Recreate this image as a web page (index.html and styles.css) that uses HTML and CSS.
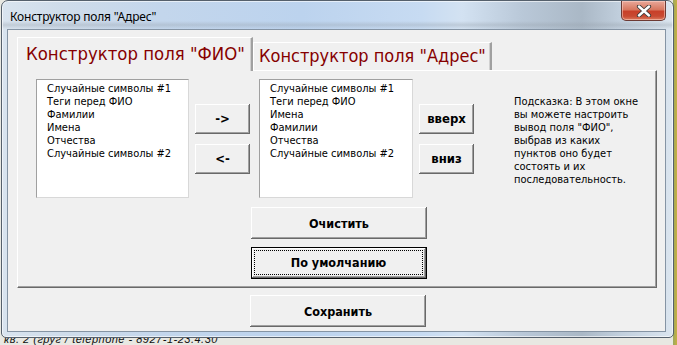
FILE: index.html
```html
<!DOCTYPE html>
<html lang="ru">
<head>
<meta charset="utf-8">
<title>Конструктор поля "Адрес"</title>
<link rel="stylesheet" href="styles.css">
</head>
<body>
<div class="desk">
  <div class="window">
    <div class="titlebar">
      <span class="title">Конструктор поля "Адрес"</span>
      <div class="close">
        <svg width="16" height="12" viewBox="0 0 16 12"><path d="M3 1.5 L13 10.5 M13 1.5 L3 10.5" stroke="#3a3a3a" stroke-width="4.2" stroke-linecap="round"/><path d="M3 1.5 L13 10.5 M13 1.5 L3 10.5" stroke="#fff" stroke-width="2.4" stroke-linecap="round"/></svg>
      </div>
    </div>
    <div class="client">
      <div class="tabs">
        <div class="tab active">Конструктор поля "ФИО"</div>
        <div class="tab second">Конструктор поля "Адрес"</div>
      </div>
      <div class="page">
        <div class="row">
          <ul class="list">
            <li>Случайные символы #1</li>
            <li>Теги перед ФИО</li>
            <li>Фамилии</li>
            <li>Имена</li>
            <li>Отчества</li>
            <li>Случайные символы #2</li>
          </ul>
          <div class="btncol">
            <button class="btn small">-&gt;</button>
            <button class="btn small">&lt;-</button>
          </div>
          <ul class="list list2">
            <li>Случайные символы #1</li>
            <li>Теги перед ФИО</li>
            <li>Имена</li>
            <li>Фамилии</li>
            <li>Отчества</li>
            <li>Случайные символы #2</li>
          </ul>
          <div class="btncol">
            <button class="btn small">вверх</button>
            <button class="btn small">вниз</button>
          </div>
          <p class="hint">Подсказка: В этом окне<br>вы можете настроить<br>вывод поля "ФИО",<br>выбрав из каких<br>пунктов оно будет<br>состоять и их<br>последовательность.</p>
        </div>
        <div class="actions">
          <button class="btn wide">Очистить</button>
          <button class="btn wide focused"><span class="focus">По умолчанию</span></button>
        </div>
      </div>
      <div class="footer">
        <button class="btn wide save">Сохранить</button>
      </div>
    </div>
  </div>
  <div class="backtext">кв. 2 (груг / telephone - 8927-1-23.4.30</div>
</div>
</body>
</html>
```
FILE: styles.css
```css
html, body {
  margin: 0;
  padding: 0;
}
body {
  width: 677px;
  height: 345px;
  overflow: hidden;
  background: linear-gradient(to right, #e8e8e2 0, #e8e8e2 673px, #9aa860 673px, #c8b040 677px);
  font-family: "DejaVu Sans Condensed", "DejaVu Sans", sans-serif;
}
.desk {
  position: relative;
  width: 677px;
  height: 345px;
}
.window {
  position: relative;
  z-index: 1;
  box-sizing: border-box;
  margin-left: 1px;
  width: 673px;
  height: 338px;
  border: 1px solid #55606c;
  border-radius: 7px 7px 5px 5px;
  padding: 0 6px 5px 5px;
  display: flex;
  flex-direction: column;
  background:
    linear-gradient(to bottom, rgba(255,255,255,0) 0, rgba(255,255,255,0) 20px, rgba(150,160,170,0.35) 24px, rgba(255,255,255,0) 28px),
    linear-gradient(to right, #d9e4ef 0, #cfdcea 60px, #c3d6ec 160px, #bcd3ee 300px, #c7dbf2 420px, #d3e2f2 460px, #b9c8d8 520px, #aab8c6 580px, #c2d0de 620px, #dce6f0 673px);
  box-shadow: inset 0 0 0 1px rgba(255,255,255,0.6);
}
.titlebar {
  height: 28px;
  display: flex;
  align-items: flex-start;
}
.title {
  font-family: "Noto Sans", "Open Sans", sans-serif;
  font-size: 12px;
  color: #000;
  margin-top: 7px;
  margin-left: 3px;
  letter-spacing: -0.2px;
}
.close {
  margin-left: auto;
  margin-right: 1px;
  width: 45px;
  height: 20px;
  box-sizing: border-box;
  border: 1px solid #6c3a34;
  border-top: none;
  border-radius: 0 0 5px 5px;
  background: linear-gradient(to bottom, #e9a89a 0, #d87860 45%, #c8402a 55%, #c84a32 80%, #dc7a5e 100%);
  box-shadow: inset 0 0 0 1px rgba(255,220,210,0.5);
  display: flex;
  align-items: center;
  justify-content: center;
}
.client {
  box-sizing: border-box;
  width: 659px;
  height: 303px;
  background: #f0f0f0;
  border: 1px solid #8594a4;
  padding: 7px 0 0 9px;
  display: flex;
  flex-direction: column;
}
.tabs {
  display: flex;
  align-items: flex-end;
  height: 33px;
}
.tab {
  box-sizing: border-box;
  height: 28px;
  padding: 0 4px 0 5px;
  font-size: 18px;
  color: #860000;
  line-height: 26px;
  background: #f0f0f0;
  border-top: 1px solid #fff;
  border-left: 1px solid #fff;
  border-right: 2px solid #a0a0a0;
  box-shadow: inset -1px 0 0 #d0d0d0;
  white-space: nowrap;
}
.tab.active {
  width: 236px;
  height: 34px;
  line-height: 31px;
  font-size: 18.4px;
  padding: 0 0 0 8px;
  position: relative;
  z-index: 2;
  margin-bottom: -1px;
}
.page {
  box-sizing: border-box;
  width: 640px;
  height: 218px;
  border-top: 1px solid #fff;
  border-left: 1px solid #fff;
  border-right: 1px solid #696969;
  border-bottom: 1px solid #696969;
  box-shadow: inset -1px -1px 0 #a0a0a0;
  padding: 8px 0 0 18px;
}
.row {
  display: flex;
  align-items: flex-start;
}
.list {
  box-sizing: border-box;
  width: 153px;
  height: 119px;
  margin: 0;
  padding: 2px 0 0 10px;
  list-style: none;
  background: #fff;
  border-top: 1px solid #a0a0a0;
  border-left: 1px solid #a0a0a0;
  border-right: 1px solid #d8d8d8;
  border-bottom: 1px solid #d8d8d8;
  font-size: 11px;
  line-height: 13px;
  color: #000;
}
.list2 {
  width: 154px;
  margin-left: 9px;
}
.btncol {
  display: flex;
  flex-direction: column;
  gap: 10px;
  margin-left: 6px;
  margin-top: 25px;
}
.btn {
  box-sizing: border-box;
  padding: 0;
  margin: 0;
  background: #f0f0f0;
  border: none;
  box-shadow: inset -1px -1px 0 #696969, inset 1px 1px 0 #fff, inset -2px -2px 0 #a0a0a0;
  font-family: "DejaVu Sans Condensed", "DejaVu Sans", sans-serif;
  font-weight: bold;
  font-size: 12.5px;
  color: #000;
}
.btn.small {
  width: 55px;
  height: 30px;
  font-size: 13px;
  padding-bottom: 2px;
}
.hint {
  margin: 16px 0 0 40px;
  font-size: 11px;
  line-height: 13px;
  color: #000;
}
.actions {
  display: flex;
  flex-direction: column;
  gap: 8px;
  margin: 9px 0 0 215px;
}
.btn.wide {
  width: 176px;
  height: 32px;
}
.btn.focused {
  height: 32px;
  border: 1px solid #000;
  padding: 2px 3px 3px 2px;
}
.focus {
  display: flex;
  align-items: center;
  justify-content: center;
  height: 100%;
  border: 1px dotted #000;
  box-sizing: border-box;
}
.footer {
  margin: 7px 0 0 233px;
}
.backtext {
  position: absolute;
  left: 4px;
  top: 334px;
  font-family: "Liberation Sans", sans-serif;
  font-style: italic;
  font-size: 11px;
  line-height: 11px;
  color: #111;
  z-index: 0;
  letter-spacing: 0.5px;
}
```
